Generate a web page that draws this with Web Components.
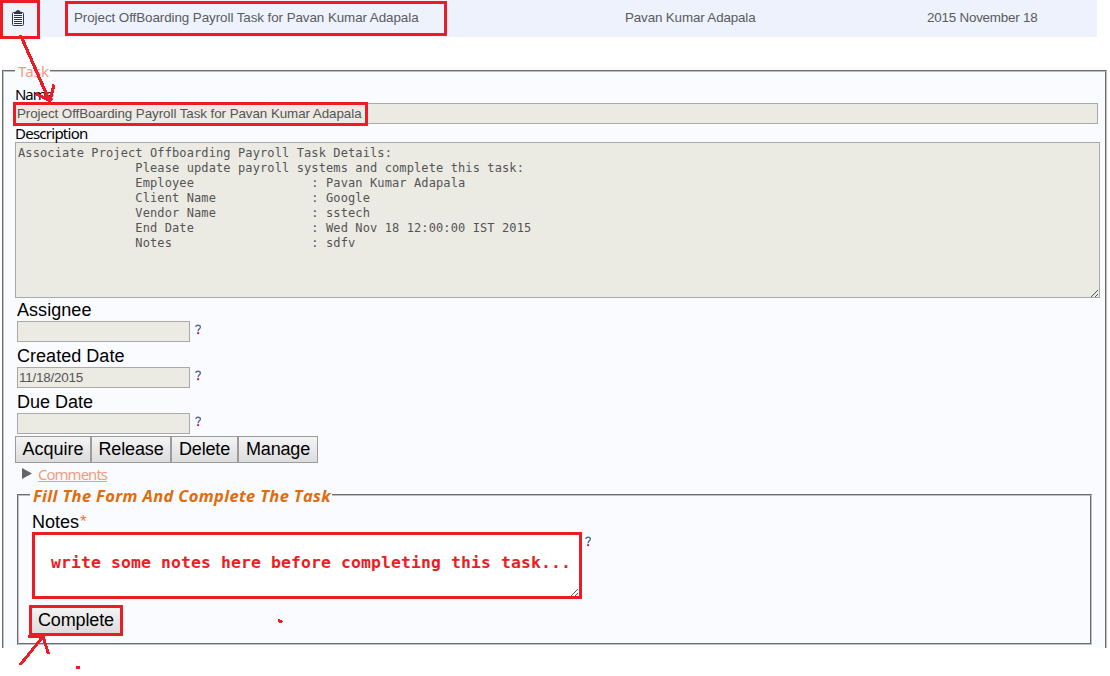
<!DOCTYPE html>
<html lang="en">
<head>
<meta charset="utf-8">
<title>Task</title>
<style>
html,body{margin:0;background:#fff}
body{width:1110px;height:676px;overflow:hidden;font-family:"Liberation Sans",Arial,sans-serif;color:#000}
</style>
</head>
<body>
<task-page></task-page>
<script>
const define = (name, html, setup) => {
  const template = document.createElement('template');
  template.innerHTML = html;
  customElements.define(name, class extends HTMLElement {
    constructor() {
      super();
      this.attachShadow({mode: 'open'}).append(template.content.cloneNode(true));
    }
    connectedCallback() { if (setup) setup(this, this.shadowRoot); }
  });
};

// Text run whose tracking is adjusted to fill the width given in "span".
define('fit-text', `<style>:host{display:inline-block;white-space:pre}span{display:inline-block}</style><span><slot></slot></span>`,
  (host, root) => {
    const want = parseFloat(host.getAttribute('span'));
    const run = root.querySelector('span');
    const n = host.textContent.length;
    run.style.letterSpacing = ((want - run.getBoundingClientRect().width) / n) + 'px';
    host.style.width = want + 'px';
  });

define('clipboard-icon', `<style>:host{display:block;width:12px;height:16px}svg{display:block}</style>
<svg width="12" height="16" viewBox="0 0 12 16">
<rect x=".5" y="2.500" width="11" height="13" rx="1" fill="#f6f8ff" stroke="#2c3448"/>
<path fill="#2c3448" d="M4 1.500Q4 0 6 0T8 1.500L10 2V4H2V2zM2 5h8v1H2zM2 7h8v1H2zM2 9h8v1H2zM2 11h8v1H2zM2 13h8v1H2z"/></svg>`);

define('task-row', `<style>
:host{display:grid;grid-template-columns:74px 551px 302px 1fr;box-sizing:border-box;width:1097px;height:37px;background:#edf2fd;color:#5b5b5b;font-size:13.4px;line-height:16px;padding-top:10px}
clipboard-icon{margin:0 0 0 12px}
</style><clipboard-icon></clipboard-icon><slot></slot>`);

define('field-set', `<style>
:host{display:block}
fieldset{box-sizing:border-box;margin:0;border:2px groove #c0c0c0;padding:0 0 0 var(--pad,11px);height:100%;min-width:0}
:host([open-end]) fieldset{border-bottom:0}
legend{padding:0 1px 0 3px;height:8px;line-height:10px;white-space:nowrap;margin-left:var(--legend-shift,0)}
</style><fieldset><legend><slot name="legend"></slot></legend><slot></slot></fieldset>`);

define('help-mark', `<style>:host{display:block;width:8px;height:12px}svg{display:block}</style>
<svg width="8" height="12" viewBox="0 0 8 12"><path d="M.8 3Q1 1.200 3 1.200Q5.400 1.200 5.400 3Q5.400 4.100 4.200 4.900Q3.200 5.600 3.200 7.200" fill="none" stroke="#5a6a94" stroke-width="1.400"/><rect x="2.200" y="8.200" width="1.900" height="1.900" fill="#cc1038"/></svg>`);

define('resize-grip', `<style>:host{display:block;width:8px;height:8px}svg{display:block}</style>
<svg width="8" height="8" viewBox="0 0 8 8" shape-rendering="crispEdges"><path fill="#555" d="M0 7h1v1H0zM1 6h1v1H1zM2 5h1v1H2zM3 4h1v1H3zM4 3h1v1H4zM5 2h1v1H5zM6 1h1v1H6zM4 7h1v1H4zM5 6h1v1H5zM6 5h1v1H6z"/></svg>`);

define('wide-input', `<style>
:host{display:flex;align-items:center;box-sizing:border-box;width:1083px;height:21px;border:1px solid #a9a9a9;background:#ebebe4;color:#545454;font-size:13.4px;line-height:15px;padding-left:1px}
</style><slot></slot>`);

define('text-block', `<style>
:host{display:flex;justify-content:space-between;box-sizing:border-box;width:1085px;height:156px;border:1px solid #a9a9a9;background:#ebebe4;color:#545454;font:12px/15px "DejaVu Sans Mono",monospace;padding:3px 0 0 2px}
.lines{display:flex;flex-direction:column;align-items:flex-start}
resize-grip{align-self:flex-end;margin:0}
</style><div class="lines"><slot></slot></div><resize-grip></resize-grip>`);

define('date-field', `<style>
:host{display:block;height:46px;margin-left:2px}
.label{height:23px;line-height:24px;font-size:18px}
.line{display:flex;gap:5px}
.box{box-sizing:border-box;width:173px;height:21px;border:1px solid #a9a9a9;background:#ebebe4;color:#545454;font-size:13.4px;line-height:19px;padding-left:1px}
help-mark{margin-top:3px}
</style><div class="label"><slot name="label"></slot></div><div class="line"><div class="box"><slot></slot></div><help-mark></help-mark></div>`);

define('push-button', `<style>
:host{display:flex;justify-content:center;box-sizing:border-box;height:27px;border:1px solid #9b9b9b;background:linear-gradient(#f4f4f4,#dcdcdc);font-size:18px;line-height:24px}
</style><slot></slot>`);

define('comments-toggle', `<style>
:host{display:flex;height:24px;color:#f19c7f;font:15px/22px "Noto Sans",sans-serif}
svg{display:block;margin:5px 6px 0 7px}
.u{height:18px;border-bottom:1px solid #f19c7f}
</style><svg width="10" height="11"><path d="M0 0L10 5.500L0 11z" fill="#666"/></svg><div class="u"><slot></slot></div>`);

define('notes-box', `<style>
:host{display:flex;justify-content:space-between;box-sizing:border-box;width:550px;height:67px;border:3px solid #ed1c24;background:#fff;color:#ed1c24;font:bold 16.4px/20px "DejaVu Sans Mono",monospace;padding:18px 0 0 16px}
resize-grip{align-self:flex-end;margin-right:1px}
</style><slot></slot><resize-grip></resize-grip>`);

// Hand-drawn red marks that lie over the form.
define('red-marks', `<style>:host{position:absolute;left:0;top:0;width:1110px;height:676px;pointer-events:none}svg{display:block}</style>
<svg width="1110" height="676" viewBox="0 0 1110 676" fill="none" stroke="#ed1c24" stroke-width="3" shape-rendering="crispEdges">
<path d="M0 1.500H38.500V37.500H0M1.500 0V39"/><path d="M66.500 2.500H445.500V34.500H66.500z"/><path d="M14.500 103.500H366.500V124.500H14.500z"/>
<path d="M30.500 606.500H121.500V634.500H30.500z"/>
<path stroke-width="3.200" stroke-linejoin="bevel" d="M20.500 35L49.500 101M36 93.500L50 101L54 84.500"/><path stroke-linejoin="bevel" d="M20 665L43 636.500M28 636.500H43L48.500 654"/>
<path d="M278 620L282 622.500M76 667.500H80"/></svg>`);

define('task-page', `<style>
:host{display:block;position:relative;width:1110px;height:676px;overflow:hidden;background:#fff}
.panel{box-sizing:border-box;width:1106px;height:581px;margin:30px 0 0 2px;background:#fafbff;display:flow-root}
.outer{width:1105px;height:581px}
.task{color:#f19c7f;font:15px/8px "Noto Sans",sans-serif}
.lab{font:15px/19px "Noto Sans",sans-serif}
.name{margin-top:10px;height:18px;line-height:19px}
.desc{height:18px;line-height:19px}
.buttons{display:flex}
.inner{--pad:13px;--legend-shift:-2px;width:1075px;height:154px;margin:4px 0 0 2px}
.fill{color:#e06c0c;font:italic bold 16.5px/10px "Open Sans","Noto Sans",sans-serif}
.notes{box-sizing:border-box;font-size:18px;line-height:26px;height:33px;display:flex;padding-top:10px}
.star{color:#e57c4a;font-size:17px;margin-left:1px;line-height:25px}
.entry{display:flex;gap:3px}
.entry help-mark{margin-top:4px}
.go{width:90px;margin-top:8px;margin-left:-1px}
</style>
<task-row><fit-text span="344.500">Project OffBoarding Payroll Task for Pavan Kumar Adapala</fit-text><fit-text span="130.500">Pavan Kumar Adapala</fit-text><fit-text span="110.500">2015 November 18</fit-text></task-row>
<div class="panel"><field-set class="outer" open-end><fit-text slot="legend" class="task" span="31">Task</fit-text>
<div class="lab name"><fit-text span="38">Name</fit-text></div>
<wide-input><fit-text span="344.500">Project OffBoarding Payroll Task for Pavan Kumar Adapala</fit-text></wide-input>
<div class="lab desc"><fit-text span="72.500">Description</fit-text></div>
<text-block></text-block>
<date-field><fit-text slot="label" span="74.500">Assignee</fit-text></date-field>
<date-field><fit-text slot="label" span="107.500">Created Date</fit-text><fit-text span="64">11/18/2015</fit-text></date-field>
<date-field><fit-text slot="label" span="76">Due Date</fit-text></date-field>
<div class="buttons"><push-button style="width:76px"><fit-text span="61">Acquire</fit-text></push-button><push-button style="width:80px"><fit-text span="65">Release</fit-text></push-button><push-button style="width:67px"><fit-text span="51">Delete</fit-text></push-button><push-button style="width:80px"><fit-text span="64">Manage</fit-text></push-button></div>
<comments-toggle><fit-text span="69">Comments</fit-text></comments-toggle>
<field-set class="inner"><fit-text slot="legend" class="fill" span="298">Fill The Form And Complete The Task</fit-text>
<div class="notes"><fit-text span="47">Notes</fit-text><span class="star">*</span></div>
<div class="entry"><notes-box><fit-text span="520">write some notes here before completing this task...</fit-text></notes-box><help-mark></help-mark></div>
<push-button class="go"><fit-text span="76">Complete</fit-text></push-button>
</field-set></field-set></div>
<red-marks></red-marks>`, (host, root) => {
  const pad = ' '.repeat(16);
  const item = (k, v) => pad + k.padEnd(24) + ': ' + v;
  const lines = ['Associate Project Offboarding Payroll Task Details:', pad + 'Please update payroll systems and complete this task:',
    item('Employee', 'Pavan Kumar Adapala'), item('Client Name', 'Google'), item('Vendor Name', 'sstech'),
    item('End Date', 'Wed Nov 18 12:00:00 IST 2015'), item('Notes', 'sdfv')];
  const block = root.querySelector('text-block');
  for (const line of lines) {
    const t = document.createElement('fit-text');
    t.setAttribute('span', (line.length * 7.333).toFixed(2));
    t.textContent = line;
    block.append(t);
  }
});
</script>
</body>
</html>
